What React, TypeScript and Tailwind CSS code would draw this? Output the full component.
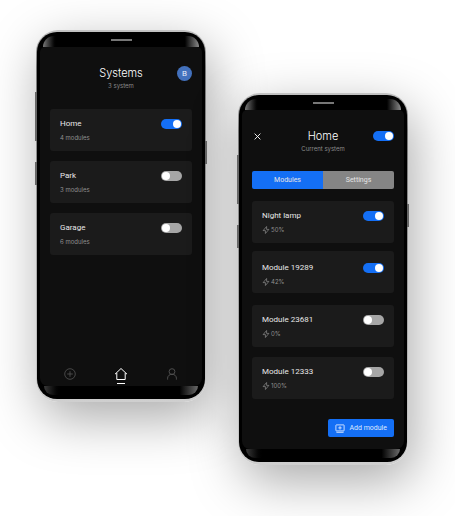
import { useId, useState, type ReactNode } from "react";

const SANS = "font-['Roboto','Liberation_Sans',sans-serif]";
const SMALL = "font-['Inter','Liberation_Sans',sans-serif] text-[6px]";

function Toggle({ id, on, label }: { id?: string; on: boolean; label?: string }) {
  return (
    <input
      id={id}
      type="checkbox"
      role="switch"
      aria-label={label}
      defaultChecked={on}
      className="flex h-2.5 w-[21px] shrink-0 cursor-pointer appearance-none items-center rounded-full bg-[#a6a6a6] px-px before:size-2 before:rounded-full before:bg-white checked:justify-end checked:bg-[#146ff5]"
    />
  );
}

function Phone({ label, children }: { label: string; children: ReactNode }) {
  return (
    <section
      aria-label={label}
      className="relative rounded-[22px] bg-linear-to-b from-[#c4c4c4] via-[#777777] via-10% to-[#cfcfcf] px-px pt-0.5 pb-[3px] shadow-[5px_16px_52px_rgba(0,0,0,0.34)]"
    >
      <span className="absolute top-[62px] -left-px h-[49px] w-0.5 bg-[#666666]" />
      <span className="absolute top-[132px] -left-px h-[23px] w-0.5 bg-[#666666]" />
      <span className="absolute top-[111px] -right-px h-[23px] w-0.5 bg-[#666666]" />
      <div className="rounded-[20px] bg-black px-[3px]">
        <div className="flex h-[15px] items-end px-[3px]">
          <div className="flex h-[11px] flex-1 rounded-t-[12px] bg-linear-to-r from-[#7a7a7a] to-black to-9%">
            <div className="flex h-full flex-1 justify-center rounded-tr-[12px] bg-linear-to-l from-[#8a8a8a] to-transparent to-9%">
              <span className="mt-[3px] h-0.5 w-[21px] bg-[#777777]" />
            </div>
          </div>
        </div>
        <div className="flex min-h-[339px] flex-col rounded-t-[5px] rounded-b-[8px] bg-[#0f0f0f] px-2.5 pt-[18px]">
          {children}
        </div>
        <div className="h-[13px] px-1">
          <div className="h-[9px] rounded-b-[12px] bg-linear-to-r from-[#3a3a3a] to-black to-12%">
            <div className="h-full rounded-br-[12px] bg-linear-to-l from-[#6a6a6a] to-transparent to-12%" />
          </div>
        </div>
      </div>
    </section>
  );
}

function Header({ title, subtitle, left, right }: { title: string; subtitle: string; left?: ReactNode; right: ReactNode }) {
  return (
    <header className="grid grid-cols-[1fr_auto_1fr]">
      <div className="flex h-4 items-center">{left}</div>
      <div className="text-center">
        <h1 className="font-['Inter','Liberation_Sans',sans-serif] text-[11px] leading-4 font-light text-white">{title}</h1>
        <p className={`leading-[9px] text-[#8a8a8a] ${SMALL}`}>{subtitle}</p>
      </div>
      <div className="flex h-4 items-center justify-end">{right}</div>
    </header>
  );
}

function Card({ title, on, spacing = "pt-2 pb-1.5", children }: { title: string; on: boolean; spacing?: string; children: ReactNode }) {
  const id = useId();
  return (
    <li className={`rounded-[3px] bg-[#1b1b1b] px-2.5 ${spacing}`}>
      <div className="flex items-center justify-between">
        <label htmlFor={id} className="text-[8px] leading-[13px] text-[#e8e8e8]">
          {title}
        </label>
        <Toggle id={id} on={on} />
      </div>
      <p className={`flex items-center gap-px leading-[15px] text-[#8f8f8f] ${SMALL}`}>{children}</p>
    </li>
  );
}

function Bolt() {
  return (
    <svg viewBox="0 0 8 8" className="size-2" fill="none" stroke="currentColor" strokeWidth="0.7" strokeLinejoin="round" aria-hidden="true">
      <path d="M4.6 0.5 1.1 4.6h2.3v2.9L6.9 3.4H4.6Z" />
    </svg>
  );
}

const systems = [
  { name: "Home", count: 4, on: true },
  { name: "Park", count: 3, on: false },
  { name: "Garage", count: 6, on: false },
];

const modules = [
  { name: "Night lamp", level: "50%", on: true },
  { name: "Module 19289", level: "42%", on: true, spacing: "-mt-0.5 mb-0.5 pt-2.5 pb-1" },
  { name: "Module 23681", level: "0%", on: false },
  { name: "Module 12333", level: "100%", on: false },
];

function SystemsScreen() {
  return (
    <Phone label="Systems">
      <Header
        title="Systems"
        subtitle="3 system"
        right={
          <button aria-label="Profile" className="size-[15px] rounded-full bg-[#4371bd] text-[8px] leading-[15px] text-[#e4ecf8]">
            B
          </button>
        }
      />
      <ul className="mt-[19px] flex flex-col gap-2.5">
        {systems.map((s) => (
          <Card key={s.name} title={s.name} on={s.on}>
            {s.count} modules
          </Card>
        ))}
      </ul>
      <nav className="-mx-1.5 mt-auto grid grid-cols-3 text-[#555555]">
        <button aria-label="Add" className="flex h-[19px] justify-center pt-px">
          <svg viewBox="0 0 12 12" className="size-3" fill="none" stroke="currentColor" strokeWidth="0.8">
            <circle cx="6" cy="6" r="5.3" />
            <path d="M6 3.2v5.6M3.2 6h5.6" />
          </svg>
        </button>
        <button aria-label="Home" aria-current="page" className="flex h-[19px] flex-col items-center text-white">
          <svg viewBox="0 0 14 14" className="size-3.5" fill="none" stroke="currentColor" strokeWidth="1">
            <path d="M1 7.2 7 1.5l6 5.7M2.8 6v6.5h8.4V6" />
          </svg>
          <span className="mt-0.5 h-px w-2 bg-white" />
        </button>
        <button aria-label="Account" className="flex h-[19px] justify-center pt-px">
          <svg viewBox="0 0 12 12" className="size-3" fill="none" stroke="currentColor" strokeWidth="0.9">
            <circle cx="6" cy="3.6" r="2.9" />
            <path d="M1.6 11.6V10.2a4.4 4 0 0 1 8.8 0v1.4" />
          </svg>
        </button>
      </nav>
    </Phone>
  );
}

function HomeScreen() {
  const [tab, setTab] = useState("Modules");
  return (
    <Phone label="Home">
      <Header
        title="Home"
        subtitle="Current system"
        left={
          <button aria-label="Close" className="pl-0.5 text-white">
            <svg viewBox="0 0 7 7" className="size-[7px]" fill="none" stroke="currentColor" strokeWidth="0.9">
              <path d="m0.6 0.6 5.8 5.8M6.4 0.6 0.6 6.4" />
            </svg>
          </button>
        }
        right={<Toggle on label="Home power" />}
      />
      <div role="tablist" className="mt-[18px] grid grid-cols-2 overflow-hidden rounded-[2px]">
        {["Modules", "Settings"].map((name) => (
          <button
            key={name}
            role="tab"
            aria-selected={tab === name}
            onClick={() => setTab(name)}
            className="bg-[#858585] text-[7px] leading-[18px] text-[#e6e6e6] aria-selected:bg-[#146ff5]"
          >
            {name}
          </button>
        ))}
      </div>
      <ul className="mt-3 flex flex-col gap-2.5">
        {modules.map((m) => (
          <Card key={m.name} title={m.name} on={m.on} spacing={m.spacing}>
            <Bolt />
            {m.level}
          </Card>
        ))}
      </ul>
      <button className="mt-5 mb-3 flex items-center gap-1 self-end rounded-[2px] bg-[#146ff5] px-[7px] text-[7px] leading-[18px] text-[#dfeaff]">
        <svg viewBox="0 0 10 9" className="h-[9px] w-2.5" fill="none" stroke="currentColor" strokeWidth="0.9" aria-hidden="true">
          <rect x="0.9" y="0.9" width="8.2" height="6" rx="0.4" />
          <path d="M5 2.2v3.4M3.3 3.9h3.4M1.4 8.3h7.2" />
        </svg>
        Add module
      </button>
    </Phone>
  );
}

export default function App() {
  return (
    <main className={`grid min-h-screen grid-cols-2 items-start gap-8 overflow-hidden bg-white pt-[30px] pr-[47px] pb-10 pl-9 ${SANS}`}>
      <SystemsScreen />
      <div className="pt-[63px]">
        <HomeScreen />
      </div>
    </main>
  );
}
